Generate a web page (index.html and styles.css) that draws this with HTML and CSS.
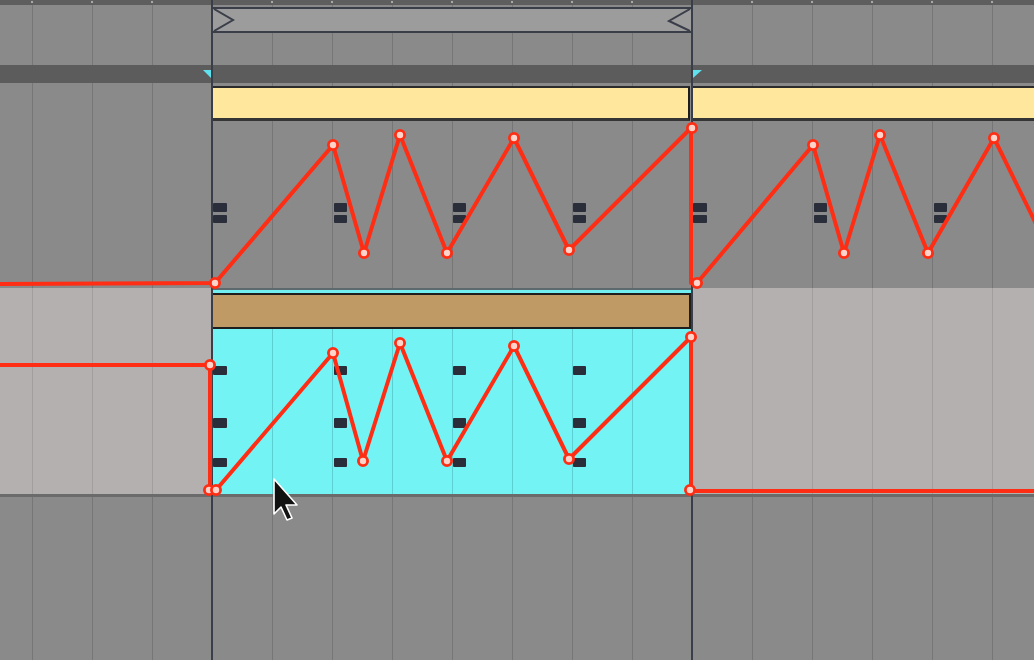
FILE: index.html
```html
<!DOCTYPE html>
<html>
<head>
<meta charset="utf-8">
<title>Arrangement automation</title>
<link rel="stylesheet" href="styles.css">
</head>
<body>
<div class="arr">
  <div class="ruler"></div>
  <div class="loop-row grid">
    <div class="brace">
      <svg class="chev" width="24" height="22" viewBox="0 0 24 22"><polyline points="1,0 20,11 1,22" fill="none" stroke="#3a3e49" stroke-width="2"/></svg>
      <svg class="chev" width="24" height="22" viewBox="0 0 24 22"><polyline points="23,0 2,12 23,22" fill="none" stroke="#3a3e49" stroke-width="2"/></svg>
    </div>
  </div>
  <div class="strip"></div>
  <div class="spacer grid"></div>
  <div class="track track1 grid">
    <div class="pre"></div>
    <div class="clip clip-a"><div class="head yellow"></div></div>
    <div class="clip-gap"></div>
    <div class="clip clip-b"><div class="head yellow open"></div></div>
  </div>
  <div class="track track2">
    <div class="pre light"></div>
    <div class="sel">
      <div class="cap"></div>
      <div class="cap-cyan"></div>
      <div class="head brown"></div>
      <div class="body cyan"></div>
    </div>
    <div class="rest light"></div>
  </div>
  <div class="bottom grid"></div>

  <svg class="overlay" width="1034" height="660" viewBox="0 0 1034 660">
    <!-- loop start/end markers -->
    <polygon points="203,70 211,70 211,78" fill="#5fe1ee"/>
    <polygon points="693,70 702,70 693,78" fill="#5fe1ee"/>
    <!-- selection lines -->
    <rect x="211" y="0" width="2" height="660" fill="#3a3e49"/>
    <rect x="691" y="0" width="2" height="660" fill="#3a3e49"/>
    <!-- track 1 markers -->
    <g fill="#2a2e3a">
      <rect x="213" y="203" width="14" height="9" rx="1"/><rect x="213" y="215" width="14" height="8" rx="1"/>
      <rect x="334" y="203" width="13" height="9" rx="1"/><rect x="334" y="215" width="13" height="8" rx="1"/>
      <rect x="453" y="203" width="13" height="9" rx="1"/><rect x="453" y="215" width="13" height="8" rx="1"/>
      <rect x="573" y="203" width="13" height="9" rx="1"/><rect x="573" y="215" width="13" height="8" rx="1"/>
      <rect x="693" y="203" width="14" height="9" rx="1"/><rect x="693" y="215" width="14" height="8" rx="1"/>
      <rect x="814" y="203" width="13" height="9" rx="1"/><rect x="814" y="215" width="13" height="8" rx="1"/>
      <rect x="934" y="203" width="13" height="9" rx="1"/><rect x="934" y="215" width="13" height="8" rx="1"/>
    </g>
    <!-- track 2 markers -->
    <g fill="#2a2e3a">
      <rect x="213" y="366" width="14" height="9" rx="1"/><rect x="213" y="418" width="14" height="10" rx="1"/><rect x="213" y="458" width="14" height="9" rx="1"/>
      <rect x="334" y="366" width="13" height="9" rx="1"/><rect x="334" y="418" width="13" height="10" rx="1"/><rect x="334" y="458" width="13" height="9" rx="1"/>
      <rect x="453" y="366" width="13" height="9" rx="1"/><rect x="453" y="418" width="13" height="10" rx="1"/><rect x="453" y="458" width="13" height="9" rx="1"/>
      <rect x="573" y="366" width="13" height="9" rx="1"/><rect x="573" y="418" width="13" height="10" rx="1"/><rect x="573" y="458" width="13" height="9" rx="1"/>
    </g>
    <!-- automation lines -->
    <g fill="none" stroke="#ff2d13" stroke-width="4" stroke-linejoin="round">
      <polyline points="0,284 215,283 333,145 364,253 400,135 447,253 514,138 569,250 691,128 691,283 697,283 813,145 844,253 880,135 928,253 994,138 1040,232"/>
      <polyline points="0,365 210,365 210,490 216,490 333,353 363,461 400,343 447,461 514,346 569,459 691,337 691,491 1034,491"/>
    </g>
    <g fill="#ffd3c9" stroke="#ff2d13" stroke-width="2.8">
      <circle cx="215" cy="283" r="4.6"/>
      <circle cx="333" cy="145" r="4.6"/>
      <circle cx="364" cy="253" r="4.6"/>
      <circle cx="400" cy="135" r="4.6"/>
      <circle cx="447" cy="253" r="4.6"/>
      <circle cx="514" cy="138" r="4.6"/>
      <circle cx="569" cy="250" r="4.6"/>
      <circle cx="692" cy="128" r="4.6"/>
      <circle cx="697" cy="283" r="4.6"/>
      <circle cx="813" cy="145" r="4.6"/>
      <circle cx="844" cy="253" r="4.6"/>
      <circle cx="880" cy="135" r="4.6"/>
      <circle cx="928" cy="253" r="4.6"/>
      <circle cx="994" cy="138" r="4.6"/>

      <circle cx="210" cy="365" r="4.6"/>
      <circle cx="209" cy="490" r="4.6"/>
      <circle cx="216" cy="490" r="4.6"/>
      <circle cx="333" cy="353" r="4.6"/>
      <circle cx="363" cy="461" r="4.6"/>
      <circle cx="400" cy="343" r="4.6"/>
      <circle cx="447" cy="461" r="4.6"/>
      <circle cx="514" cy="346" r="4.6"/>
      <circle cx="569" cy="459" r="4.6"/>
      <circle cx="691" cy="337" r="4.6"/>
      <circle cx="690" cy="490" r="4.6"/>
    </g>
    <!-- mouse cursor -->
    <path d="M274,479 L274,514 L281,507 L287,520 L292,518 L286,505 L297,505 Z" fill="#111" stroke="#fff" stroke-width="1.6" stroke-linejoin="round"/>
  </svg>
</div>
</body>
</html>
```

FILE: styles.css
```css
html, body {
  margin: 0;
  padding: 0;
}
body {
  width: 1034px;
  height: 660px;
  overflow: hidden;
  background: #8a8a8a;
  font-family: "Liberation Sans", Arial, sans-serif;
}
.arr {
  position: relative;
  width: 1034px;
  height: 660px;
  display: flex;
  flex-direction: column;
}
.grid {
  background-color: #8a8a8a;
  background-image: linear-gradient(90deg, #767676 1px, transparent 1px);
  background-size: 60px 100%;
  background-position: 32px 0;
  background-attachment: fixed;
}
.ruler {
  height: 5px;
  flex: none;
  background-color: #5e5e5e;
  background-image: radial-gradient(circle at 1px 2px, #a8a8a8 1px, transparent 1.6px);
  background-size: 60px 5px;
  background-position: 31px 0;
  background-repeat: repeat-x;
}
.loop-row {
  height: 60px;
  flex: none;
  box-sizing: border-box;
  padding: 2px 0 0 211px;
}
.brace {
  width: 482px;
  height: 26px;
  box-sizing: border-box;
  border: 2px solid #3a3e49;
  background: #9c9c9c;
  display: flex;
  justify-content: space-between;
  align-items: center;
}
.chev {
  display: block;
}
.strip {
  height: 18px;
  flex: none;
  background: #5c5c5c;
}
.spacer {
  height: 3px;
  flex: none;
}
.track {
  display: flex;
  flex: none;
}
.track1 {
  height: 202px;
}
.pre {
  width: 212px;
  flex: none;
}
.clip-a {
  width: 478px;
  flex: none;
}
.clip-gap {
  width: 3px;
  flex: none;
}
.clip-b {
  flex: 1;
}
.head {
  box-sizing: border-box;
}
.yellow {
  height: 35px;
  background: #ffe89e;
  border-top: 2px solid #2c2c2c;
  border-bottom: 3px solid #353535;
  border-right: 2px solid #1e1e1e;
}
.yellow.open {
  border-right: none;
}
.track2 {
  height: 206px;
}
.light {
  background-color: #b4b0af;
  background-image: linear-gradient(90deg, #a29e9d 1px, transparent 1px);
  background-size: 60px 100%;
  background-position: 32px 0;
  background-attachment: fixed;
}
.sel {
  width: 479px;
  flex: none;
  display: flex;
  flex-direction: column;
}
.cap {
  height: 2px;
  background: #5c6a6e;
}
.cap-cyan {
  height: 3px;
  background: #70eef0;
}
.brown {
  height: 36px;
  background: #c09a64;
  border-top: 2px solid #1e1e1e;
  border-bottom: 2px solid #1e1e1e;
  border-right: 2px solid #1e1e1e;
}
.cyan {
  flex: 1;
  background-color: #74f3f5;
  background-image: linear-gradient(90deg, #5ccfd3 1px, transparent 1px);
  background-size: 60px 100%;
  background-position: 32px 0;
  background-attachment: fixed;
}
.rest {
  flex: 1;
}
.bottom {
  flex: 1;
  border-top: 3px solid #6b6b6b;
}
.overlay {
  position: absolute;
  left: 0;
  top: 0;
  pointer-events: none;
}
```
